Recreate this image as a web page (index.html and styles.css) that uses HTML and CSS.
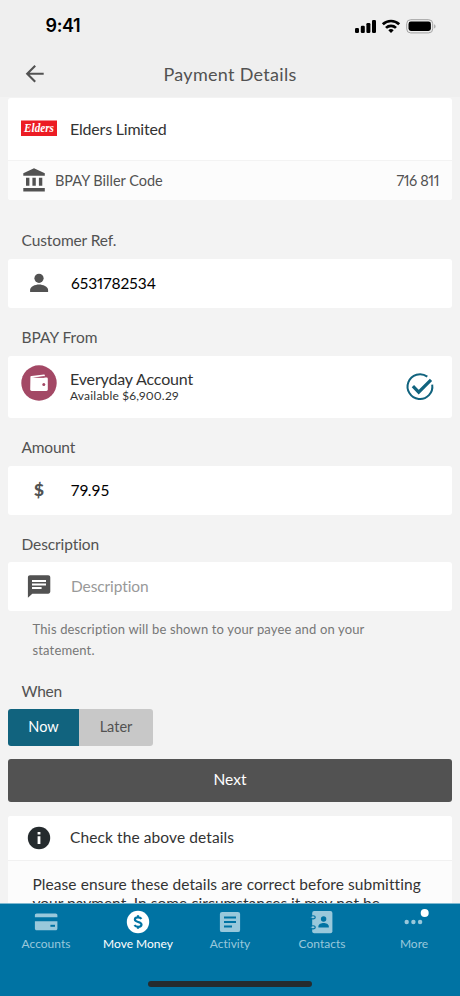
FILE: index.html
```html
<!DOCTYPE html>
<html lang="en">
<head>
<meta charset="utf-8">
<title>Payment Details</title>
<link rel="stylesheet" href="styles.css">
</head>
<body>
<div class="app">
  <header class="top">
    <div class="status">
      <span class="time">9:41</span>
      <svg class="status-icons" width="84" height="18" viewBox="0 0 84 18">
        <g fill="#000">
          <rect x="1" y="11" width="4" height="5" rx="1.2"/>
          <rect x="6.8" y="8.8" width="4" height="7.2" rx="1.2"/>
          <rect x="12.4" y="6" width="4" height="10" rx="1.2"/>
          <rect x="18" y="3" width="4" height="13" rx="1.2"/>
        </g>
        <g fill="none" stroke="#000" stroke-width="2.7">
          <path d="M28.8 7.3a11.8 11.8 0 0 1 16.4 0"/>
          <path d="M32 10.9a7.2 7.2 0 0 1 10 0"/>
        </g>
        <path d="M37 16l-2.7-2.7a3.9 3.9 0 0 1 5.4 0z" fill="#000"/>
        <rect x="52.7" y="2.7" width="26" height="13.2" rx="4" fill="none" stroke="#a2a2a2"/>
        <rect x="54.5" y="4.6" width="22.4" height="9.4" rx="2.4" fill="#000"/>
        <path d="M80.2 7.2c1.8.7 1.8 3.6 0 4.3z" fill="#a2a2a2"/>
      </svg>
    </div>
    <div class="nav">
      <svg class="back" width="20" height="20" viewBox="0 0 20 20"><path d="M18.7 9.7H2.5M10.2 1.7L2.2 9.7l8 8" fill="none" stroke="#525252" stroke-width="2.1"/></svg>
      <h1 class="t-title">Payment Details</h1>
    </div>
  </header>

  <main class="content">
    <section class="card biller">
      <div class="biller-head">
        <svg class="logo" width="36" height="16" viewBox="0 0 36 16">
          <rect width="36" height="15.5" y=".5" fill="#ec1c24"/>
          <text x="3" y="12.2" class="logo-text" textLength="30" lengthAdjust="spacingAndGlyphs">Elders</text>
        </svg>
        <span class="t-name">Elders Limited</span>
      </div>
      <div class="biller-code">
        <svg width="24" height="26" viewBox="0 0 24 26" fill="#525252"><path d="M2.3 6.3L13 1.2l10.8 5.1V8.7H2.3zM5 10.8h3.4v8H5zM11.4 10.8h3.4v8h-3.4zM17.9 10.8h3.4v8h-3.4zM2.3 21.1h21.5v3.3H2.3z"/></svg>
        <span class="t-code">BPAY Biller Code</span>
        <span class="t-number">716 811</span>
      </div>
    </section>

    <h2 class="label t-ref">Customer Ref.</h2>
    <section class="card field">
      <svg class="field-icon" width="26" height="26" viewBox="0 0 26 26" fill="#525252"><circle cx="13" cy="8.3" r="4.6"/><path d="M4.1 21.9v-1.9c0-3.3 5-5.4 8.9-5.4s9.1 2.1 9.1 5.4v1.9z"/></svg>
      <span class="t-refno">6531782534</span>
    </section>

    <h2 class="label t-from">BPAY From</h2>
    <section class="card account">
      <svg class="wallet" width="36" height="36" viewBox="0 0 36 36">
        <circle cx="18" cy="18" r="17.7" fill="#a34865"/>
        <path d="M9.4 12.2c0-.7.4-1 1-1.1l12.6-1.7c.6-.1.8.2.8.7v1.2L10.7 12.6H25.4c.9 0 1.4.5 1.4 1.3v10.6c0 .9-.5 1.4-1.4 1.4H10.7c-.8 0-1.5-.6-1.5-1.4z" fill="#fff"/>
        <path d="M12.5 12.7L23.5 11.2v1.5z" fill="#a34865"/>
        <circle cx="22.8" cy="19.4" r="1.5" fill="#a34865"/>
      </svg>
      <div class="account-text">
        <span class="t-account">Everyday Account</span>
        <span class="t-avail">Available $6,900.29</span>
      </div>
      <svg class="check" width="28" height="28" viewBox="0 0 28 28" fill="none" stroke="#11637e"><path d="M21.3 3.6A12.4 12.4 0 1 0 26.2 11.6" stroke-width="2"/><path d="M6.9 13.1l5.8 6L25 6.8" stroke-width="3.2"/></svg>
    </section>

    <h2 class="label t-amount">Amount</h2>
    <section class="card field">
      <span class="field-icon dollar">$</span>
      <span class="t-sum">79.95</span>
    </section>

    <h2 class="label t-desc">Description</h2>
    <section class="card field">
      <svg class="field-icon" width="26" height="26" viewBox="0 0 26 26"><path d="M4 2.3h18.2c1.2 0 2.1.9 2.1 2.1v14.2c0 1.2-.9 2.1-2.1 2.1H6.3L1.9 24.7V4.4C1.9 3.2 2.8 2.3 4 2.3z" fill="#525252"/><path d="M6 7.9h14M6 11.5h14M6 15h9.6" stroke="#fff" stroke-width="2"/></svg>
      <span class="t-placeholder">Description</span>
    </section>
    <p class="help"><span>This description will be shown to your payee and on your</span><br><span>statement.</span></p>

    <h2 class="label t-when">When</h2>
    <div class="toggle">
      <button class="toggle-on">Now</button>
      <button class="toggle-off">Later</button>
    </div>
    <button class="next">Next</button>

    <section class="card notice">
      <div class="notice-head">
        <svg width="24" height="24" viewBox="0 0 24 24"><circle cx="12" cy="12" r="11.2" fill="#252b2e"/><path d="M10.6 10.2h2.8V18h-2.8zM10.6 6h2.8v2.6h-2.8z" fill="#fff"/></svg>
        <span class="t-check">Check the above details</span>
      </div>
      <p class="notice-body"><span>Please ensure these details are correct before submitting</span><br><span class="t-body2">your payment. In some circumstances it may not be</span></p>
    </section>
  </main>

  <nav class="tabs">
    <div class="tab">
      <svg width="24" height="24" viewBox="0 0 24 24"><path d="M.9 7.2V5.3C.9 4.2 1.6 3.5 2.7 3.5h18.9c1.1 0 1.8.7 1.8 1.8v1.9zM.9 11.2h22.5v7.2c0 1.1-.7 1.8-1.8 1.8H2.7c-1.1 0-1.8-.7-1.8-1.8z" fill="#99c8db"/><path d="M16.4 15.8h4.6" stroke="#0073a3" stroke-width="2"/></svg>
      <span>Accounts</span>
    </div>
    <div class="tab active">
      <svg width="24" height="24" viewBox="0 0 24 24"><circle cx="12" cy="12" r="11.2" fill="#fff"/><path d="M15.5 8.9c-.8-1-2-1.5-3.5-1.5-1.9 0-3.1.8-3.1 2.2 0 3.2 6.600 1.500 6.600 4.900 0 1.500-1.400 2.300-3.300 2.300-1.600 0-2.900-.6-3.800-1.700M12 5.300v2.200M12 16.500v2.300" fill="none" stroke="#0073a3" stroke-width="2.2"/></svg>
      <span>Move Money</span>
    </div>
    <div class="tab">
      <svg width="24" height="24" viewBox="0 0 24 24"><rect x="1.9" y="1.9" width="20.2" height="20.2" rx="2.2" fill="#99c8db"/><path d="M6 7.4h12M6 12h12M6 16.6h8" stroke="#0073a3" stroke-width="2"/></svg>
      <span>Activity</span>
    </div>
    <div class="tab">
      <svg width="24" height="24" viewBox="0 0 24 24"><rect x="2.2" y="1" width="20.2" height="22.3" rx="2" fill="#99c8db"/><g fill="#99c8db" stroke="#0073a3" stroke-width="1.1"><ellipse cx="3" cy="7.3" rx="2.2" ry="1.6"/><ellipse cx="3" cy="17.3" rx="2.2" ry="1.6"/></g><g fill="#0073a3"><circle cx="13.6" cy="9" r="2.7"/><path d="M8.4 17.6v-1.2c0-2.1 3-3.3 5.2-3.3s5.2 1.2 5.2 3.3v1.2z"/></g></svg>
      <span>Contacts</span>
    </div>
    <div class="tab">
      <svg width="36" height="24" viewBox="0 0 36 24"><g fill="#99c8db"><circle cx="10.7" cy="12" r="2.2"/><circle cx="17.4" cy="12" r="2.2"/><circle cx="24.1" cy="12" r="2.2"/></g><circle cx="28.7" cy="3" r="4" fill="#fff"/></svg>
      <span>More</span>
    </div>
  </nav>
  <div class="home"><div class="home-bar"></div></div>
</div>
</body>
</html>
```
FILE: styles.css
```css
* { box-sizing: border-box; }
body { margin: 0; background: #f3f3f3; font-family: Lato, "Liberation Sans", sans-serif; color: #525252; font-variant-ligatures: none; font-variant-numeric: proportional-nums; }
h1, h2, p { margin: 0; font-weight: 400; }
button { border: 0; padding: 0 0 2px; margin: 0; font: inherit; }
svg { display: block; flex: none; overflow: visible; }
span { white-space: nowrap; }

.app { width: 460px; height: 996px; overflow: hidden; display: flex; flex-direction: column; }

.top { height: 97px; flex: none; background: #efefef; }
.status { height: 51px; padding: 1px 22px 0 45.5px; display: flex; align-items: center; justify-content: space-between; }
.time { font: 600 18px/20px Inter, sans-serif; color: #000; letter-spacing: -0.35px; }
.nav { height: 46px; padding: 0 25px 1px; display: grid; grid-template-columns: 20px 1fr 20px; align-items: center; }
.t-title { font-size: 18px; text-align: center; letter-spacing: 0.3px; }

.content { flex: 1; min-height: 0; padding: 1px 8px 0; overflow: hidden; }
.card { background: #fff; border-radius: 3px; overflow: hidden; }

.biller { height: 102px; }
.biller-head { height: 63px; padding: 0 13px 2px; display: flex; align-items: center; gap: 13px; border-bottom: 1px solid #f3f3f3; }
.logo-text { font: italic 700 13px "Liberation Serif", serif; fill: #fff; }
.t-name { font-size: 16px; color: #333; letter-spacing: -0.2px; }
.biller-code { height: 39px; padding: 0 13px 1px; display: flex; align-items: center; gap: 10px; background: #fcfcfc; }
.t-code { font-size: 14.5px; }
.t-number { font-size: 14.5px; margin-left: auto; letter-spacing: -0.4px; }

.label { height: 20px; margin: 30px 0 9px 13.5px; font-size: 15.5px; line-height: 20px; white-space: nowrap; }
.field { height: 49px; padding: 0 0 2px 18px; display: flex; align-items: center; gap: 19px; }
.field-icon { width: 26px; flex: none; }
.dollar { font-size: 17.5px; font-weight: 900; line-height: 20px; text-align: center; }
.t-refno, .t-sum { font-size: 15.5px; color: #000; }
.t-sum { letter-spacing: 0.5px; }
.t-placeholder { font-size: 15.5px; color: #999; letter-spacing: -0.1px; }

.label.t-from, .label.t-amount, .label.t-desc { margin-top: 19px; }
.label.t-desc { margin-bottom: 8.4px; }
.t-amount { letter-spacing: -0.2px; }
.t-desc, .t-ref { letter-spacing: -0.1px; }
.account { height: 62px; padding: 0 18px 0 13px; display: flex; align-items: center; gap: 13px; }
.wallet { margin-top: -8px; }
.account-text { flex: 1; display: flex; flex-direction: column; padding-bottom: 2px; }
.t-account { font-size: 16px; line-height: 18px; color: #333; letter-spacing: -0.15px; }
.t-avail { font-size: 12px; line-height: 15px; color: #333; letter-spacing: 0.2px; }

.help { margin: 7.6px 0 0 24.5px; font-size: 13px; line-height: 21px; color: #777; letter-spacing: 0.15px; }
.label.t-when { margin: 20px 0 8px 13.5px; letter-spacing: -0.3px; }
.toggle { display: flex; height: 37px; width: 145px; border-radius: 3px; overflow: hidden; }
.toggle-on { width: 71px; background: #11637e; color: #fff; font-size: 14.5px; }
.toggle-off { width: 74px; background: #c8c8c8; color: #525252; font-size: 14.5px; }
.next { display: block; width: 100%; height: 43px; margin: 13px 0 14px; padding-bottom: 2px; border-radius: 3px; background: #525252; color: #fff; font-size: 15.5px; }

.notice { height: 110px; background: #fcfcfc; }
.notice-head { height: 45px; padding-left: 19px; display: flex; align-items: center; gap: 19px; background: #fff; border-bottom: 1px solid #f1f1f1; font-size: 15.5px; letter-spacing: 0.1px; color: #333; }
.t-check { padding-bottom: 2px; }
.notice-body { padding: 14px 24px 0 24.5px; font-size: 15.5px; line-height: 19px; color: #333; letter-spacing: 0.07px; }
.t-body2 { letter-spacing: 0; }

.tabs { height: 66px; flex: none; padding-top: 6px; display: grid; grid-template-columns: repeat(5, 1fr); background: #0073a3; border-top: 1px solid #7fb9d1; }
.tab { display: flex; flex-direction: column; align-items: center; gap: 2px; font-size: 12px; line-height: 16px; color: #99c8db; }
.tab.active { color: #fff; }
.home { height: 27px; flex: none; padding-top: 12px; display: flex; justify-content: center; background: #0073a3; }
.home-bar { width: 164px; height: 6px; border-radius: 3px; background: #252b2e; }
```
